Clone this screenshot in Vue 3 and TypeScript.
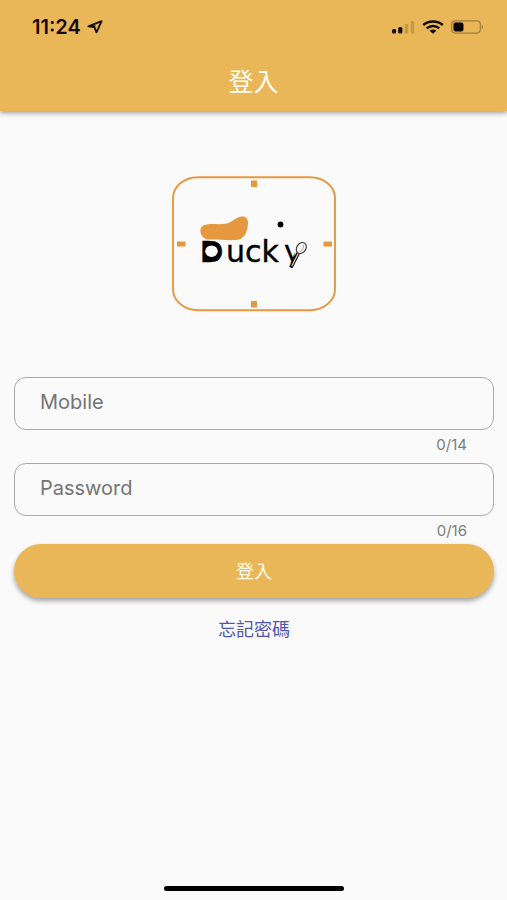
<script setup lang="ts">
import { reactive } from 'vue'

interface Field {
  id: string
  label: string
  type: string
  max: number
  value: string
}

const fields = reactive<Field[]>([
  { id: 'mobile', label: 'Mobile', type: 'tel', max: 14, value: '' },
  { id: 'password', label: 'Password', type: 'password', max: 16, value: '' },
])
</script>

<template>
  <div class="screen">
    <header class="top">
      <div class="status">
        <div class="clock">
          <span>11:24</span>
          <svg width="16" height="14" viewBox="0 0 16 14" aria-hidden="true">
            <path d="M14.6 1.1 1.4 6.3 7.4 7.2 9.5 12.4Z" fill="none" stroke="#120d04" stroke-width="1.8" stroke-linejoin="round" />
            <path d="M1.4 6.3 7.4 7.2 9 5.4 5 5Z" fill="#120d04" />
          </svg>
        </div>
        <div class="signals">
          <svg width="23" height="14" viewBox="0 0 23 14" aria-hidden="true">
            <rect x="0" y="9" width="4.2" height="4.5" rx="1.5" fill="#120d04" />
            <rect x="6.2" y="7" width="4.2" height="6.5" rx="1.5" fill="#120d04" />
            <rect x="12.7" y="4" width="3.6" height="9.5" rx="1" fill="#c79a47" />
            <rect x="18.7" y="1" width="3.6" height="12.5" rx="1" fill="#c79a47" />
          </svg>
          <svg width="22" height="14" viewBox="0 0 22 14" aria-hidden="true">
            <g fill="none" stroke="#120d04" stroke-width="2.5">
              <path d="M1.2 5C6.5.3 15.5.3 20.8 5" />
              <path d="M4.7 8.4C8.3 5.2 13.7 5.2 17.3 8.4" />
            </g>
            <path d="M7.6 10.8C9.5 9.2 12.5 9.2 14.4 10.8L11 13.8Z" fill="#120d04" />
          </svg>
          <svg width="33" height="14" viewBox="0 0 33 14" aria-hidden="true">
            <rect x=".7" y=".9" width="28.6" height="12.2" rx="3.5" fill="none" stroke="#a17c3b" stroke-width="1.2" />
            <rect x="2.5" y="2.6" width="10" height="8.8" rx="1.8" fill="#080502" />
            <path d="M30.8 5C32.6 5.6 32.6 8.4 30.8 9Z" fill="#a17c3b" />
          </svg>
        </div>
      </div>
      <h1 class="title">登入</h1>
    </header>

    <main class="content">
      <svg class="logo" width="166" height="136" viewBox="0 0 166 136" role="img" aria-label="Ducky">
        <rect x="2" y="1.2" width="162" height="133" rx="25" ry="21" fill="none" stroke="#e5983f" stroke-width="1.9" />
        <text x="29" y="86" class="word heavy">D</text>
        <ellipse cx="41" cy="75.5" rx="9" ry="9" fill="#000" />
        <ellipse cx="40.5" cy="75.2" rx="6.3" ry="5.8" fill="#fafafa" />
        <text y="86" class="word"><tspan x="55">uck</tspan><tspan x="113">y</tspan></text>
        <g fill="#e5983f">
          <rect x="80" y="4.5" width="6" height="6.5" />
          <rect x="80" y="125" width="6" height="6.5" />
          <rect x="6" y="65.5" width="8.5" height="5" />
          <rect x="152.5" y="65.5" width="8.5" height="5" />
          <path d="M36 48.5C31 49 29 52 29.5 56C30 60 33 63.5 39 63.6C48 63.5 56 64.5 65 64C74 63.5 76.5 55 77 47.5C77.3 42 74.5 40 70.5 40.5C64 41.5 61 46.5 54.5 47.8C48 48.8 41 47.5 36 48.5Z" />
        </g>
        <path d="M110 87.5H120V97H110ZM123.5 79 125 67H136V82L126 88Z" fill="#fafafa" />
        <circle cx="109.5" cy="48.5" r="2.9" fill="#000" />
        <path d="M119.8 91.5 127.2 77" stroke="#111" stroke-width="3.8" />
        <path d="M120.8 90 127.2 77.5" stroke="#ccc" stroke-width="1.2" />
        <ellipse cx="130.3" cy="72" rx="4.5" ry="5.9" transform="rotate(35 130.3 72)" fill="#fafafa" stroke="#333" stroke-width="1.1" />
        <path d="M128.5 76C131.5 75 133 72 132.5 69" fill="none" stroke="#999" stroke-width=".8" />
      </svg>

      <form class="form" @submit.prevent>
        <div v-for="field in fields" :key="field.id" class="field">
          <input
            :id="field.id"
            v-model="field.value"
            class="input"
            :type="field.type"
            :maxlength="field.max"
            :placeholder="field.label"
            :aria-label="field.label"
          />
          <output class="counter" :for="field.id">{{ field.value.length }}/{{ field.max }}</output>
        </div>
        <button class="submit" type="submit">登入</button>
      </form>
      <a class="forgot" href="#forgot">忘記密碼</a>
    </main>

    <div class="home"></div>
  </div>
</template>

<style>
body {
  margin: 0;
  background: #fafafa;
}
</style>

<style scoped>
.screen {
  display: flex;
  flex-direction: column;
  min-height: 100vh;
  background: #fafafa;
  font-family: Inter, "Noto Sans CJK TC", sans-serif;
}

.top {
  background: #e9b758;
  box-shadow: 0 2px 5px rgba(0, 0, 0, 0.38);
}

.status {
  display: flex;
  justify-content: space-between;
  align-items: center;
  height: 54px;
  padding: 0 23px 0 32px;
}

.clock {
  display: flex;
  align-items: center;
  gap: 6px;
  color: #120d04;
  font-size: 20px;
  font-weight: 600;
  line-height: 24px;
}

.signals {
  display: flex;
  align-items: center;
  gap: 7px;
}

.title {
  margin: 0;
  padding-bottom: 1px;
  color: #fffdf5;
  font-size: 25px;
  font-weight: 400;
  line-height: 56px;
  text-align: center;
}

.content {
  display: flex;
  flex: 1;
  flex-direction: column;
  align-items: center;
  padding: 65px 13px 0 14px;
}

.word {
  font-family: "DejaVu Sans", sans-serif;
  font-size: 30px;
  fill: #000;
  stroke: #000;
  stroke-width: 0.4px;
}

.heavy {
  font-size: 28px;
  font-weight: 700;
}

.form {
  display: flex;
  flex-direction: column;
  align-self: stretch;
  margin-top: 65px;
}

.field {
  display: flex;
  flex-direction: column;
}

.field + .field {
  margin-top: 5px;
}

.input {
  box-sizing: border-box;
  width: 100%;
  height: 53px;
  padding: 0 25px 4px;
  border: 1px solid #a8a8a8;
  border-radius: 12px;
  outline: none;
  background: transparent;
  color: #222;
  font: 400 20px Inter, sans-serif;
}

.input::placeholder {
  color: #747474;
  opacity: 1;
}

.input:focus {
  border-color: #e9b758;
}

.counter {
  padding: 2px 27px 0 0;
  color: #7c7c7c;
  font-size: 15px;
  line-height: 26px;
  text-align: right;
}

.submit {
  height: 54px;
  padding: 0 0 2px;
  border: 0;
  border-radius: 27px;
  background: #e9b758;
  box-shadow: 0 3px 5px rgba(0, 0, 0, 0.35);
  color: #fffbea;
  font: 400 18px Inter, "Noto Sans CJK TC", sans-serif;
  cursor: pointer;
}

.forgot {
  margin-top: 19px;
  color: #5156b5;
  font-size: 18px;
  line-height: 26px;
  text-decoration: none;
}

.home {
  align-self: center;
  width: 180px;
  height: 5px;
  margin-bottom: 9px;
  border-radius: 3px;
  background: #000;
}
</style>
